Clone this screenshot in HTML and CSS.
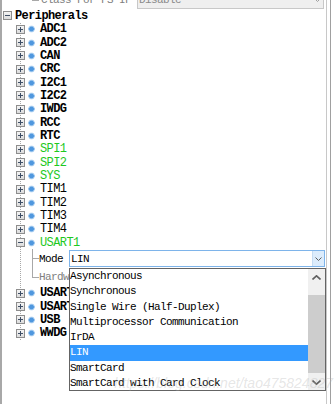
FILE: index.html
```html
<!DOCTYPE html>
<html lang="en">
<head>
  <meta charset="UTF-8">
  <title>Peripherals</title>
  <link rel="stylesheet" href="styles.css">
</head>
<body>
  <div class="frame">
    <div class="panel">

      <!-- property row cut off at the top -->
      <div class="prop top">
        <span class="branch up"></span>
        <span class="label wide dim">Class For FS IF</span>
        <div class="combo disabled">
          <span class="value">Disable</span>
          <span class="btn"><svg width="7" height="4" viewBox="0 0 7 4"><polyline points="0.5,0.5 3.5,3.5 6.5,0.5" fill="none" stroke="#a0a0a0"/></svg></span>
        </div>
      </div>

      <div class="node root"><span class="box"></span><span class="name bold">Peripherals</span></div>

      <div class="children">
        <div class="node"><span class="box plus"></span><span class="dot"></span><span class="name bold">ADC1</span></div>
        <div class="node"><span class="box plus"></span><span class="dot"></span><span class="name bold">ADC2</span></div>
        <div class="node"><span class="box plus"></span><span class="dot"></span><span class="name bold">CAN</span></div>
        <div class="node"><span class="box plus"></span><span class="dot"></span><span class="name bold">CRC</span></div>
        <div class="node"><span class="box plus"></span><span class="dot"></span><span class="name bold">I2C1</span></div>
        <div class="node"><span class="box plus"></span><span class="dot"></span><span class="name bold">I2C2</span></div>
        <div class="node"><span class="box plus"></span><span class="dot"></span><span class="name bold">IWDG</span></div>
        <div class="node"><span class="box plus"></span><span class="dot"></span><span class="name bold">RCC</span></div>
        <div class="node"><span class="box plus"></span><span class="dot"></span><span class="name bold">RTC</span></div>
        <div class="node"><span class="box plus"></span><span class="dot"></span><span class="name green">SPI1</span></div>
        <div class="node"><span class="box plus"></span><span class="dot"></span><span class="name green">SPI2</span></div>
        <div class="node"><span class="box plus"></span><span class="dot"></span><span class="name green">SYS</span></div>
        <div class="node"><span class="box plus"></span><span class="dot"></span><span class="name">TIM1</span></div>
        <div class="node"><span class="box plus"></span><span class="dot"></span><span class="name">TIM2</span></div>
        <div class="node"><span class="box plus"></span><span class="dot"></span><span class="name">TIM3</span></div>
        <div class="node"><span class="box plus"></span><span class="dot"></span><span class="name">TIM4</span></div>
        <div class="node"><span class="box"></span><span class="dot"></span><span class="name green">USART1</span></div>

        <div class="prop">
          <span class="branch"></span>
          <span class="label">Mode</span>
          <div class="combo focus">
            <span class="value">LIN</span>
            <span class="btn"><svg width="7" height="4" viewBox="0 0 7 4"><polyline points="0.5,0.5 3.5,3.5 6.5,0.5" fill="none" stroke="#606060"/></svg></span>

            <!-- open dropdown -->
            <div class="list">
              <ul class="items">
                <li>Asynchronous</li>
                <li>Synchronous</li>
                <li>Single Wire (Half-Duplex)</li>
                <li>Multiprocessor Communication</li>
                <li>IrDA</li>
                <li class="selected">LIN</li>
                <li>SmartCard</li>
                <li>SmartCard with Card Clock</li>
              </ul>
              <div class="scrollbar">
                <span class="arrow"><svg width="9" height="5" viewBox="0 0 9 5"><polyline points="0.5,4.5 4.5,0.8 8.5,4.5" fill="none" stroke="#606060" stroke-width="1.6"/></svg></span>
                <div class="track"><span class="thumb"></span></div>
                <span class="arrow"><svg width="9" height="5" viewBox="0 0 9 5"><polyline points="0.5,0.5 4.5,4.2 8.5,0.5" fill="none" stroke="#606060" stroke-width="1.6"/></svg></span>
              </div>
            </div>
          </div>
        </div>

        <div class="prop">
          <span class="branch last"></span>
          <span class="label dim">Hardw</span>
          <div class="combo"></div>
        </div>

        <div class="node"><span class="box plus"></span><span class="dot"></span><span class="name bold">USART2</span></div>
        <div class="node"><span class="box plus"></span><span class="dot"></span><span class="name bold">USART3</span></div>
        <div class="node"><span class="box plus"></span><span class="dot"></span><span class="name bold">USB</span></div>
        <div class="node"><span class="box plus"></span><span class="dot"></span><span class="name bold">WWDG</span></div>
      </div>
    </div>
  </div>

  <div class="watermark">https://blog.csdn.net/tao475824827</div>
</body>
</html>
```

FILE: styles.css
```css
body {
  margin: 0;
  width: 335px;
  height: 404px;
  overflow: hidden;
  background: #fff;
  color: #000;
  font-family: "Liberation Mono", monospace;
  font-size: 11px;
}
.frame {
  width: 330px;
  height: 420px;
  border-right: 1px solid #a0a0a0;
}
.panel {
  width: 324px;
  height: 100%;
  border-left: 2px solid #a8a8a8;
  border-right: 1px solid #c8c8c8;
}
.children {
  background-image: linear-gradient(#a8a8a8 50%, transparent 50%);
  background-size: 1px 2px;
  background-repeat: repeat-y;
  background-position: 18px 0;
  padding-bottom: 20px;
  background-clip: content-box;
}

/* tree nodes */
.node {
  display: flex;
  align-items: center;
  height: 13.33px;
  padding-left: 14px;
}
.node.root {
  padding-left: 1px;
}
.box {
  width: 7px;
  height: 7px;
  border: 1px solid #8e8e8e;
  background-color: #fff;
  background-image: linear-gradient(#3f4f66, #3f4f66), linear-gradient(#f4f4f4, #dcdcdc);
  background-size: 5px 1px, 100% 100%;
  background-position: center, 0 0;
  background-repeat: no-repeat;
  flex: none;
}
.box.plus {
  background-image: linear-gradient(#3f4f66, #3f4f66), linear-gradient(#3f4f66, #3f4f66), linear-gradient(#f4f4f4, #dcdcdc);
  background-size: 5px 1px, 1px 5px, 100% 100%;
  background-position: center, center, 0 0;
}
.dot {
  width: 7px;
  height: 8px;
  margin-left: 3px;
  flex: none;
  border-radius: 40% 40% 50% 50%;
  background: radial-gradient(circle at 50% 50%, #4f97de 0 2px, #9cc6ee 2.6px 3px, #e2eef9 3.4px, transparent 4px);
}
.name {
  margin-left: 5px;
  font-size: 12px;
  letter-spacing: -0.6px;
  white-space: nowrap;
}
.root .name {
  margin-left: 3px;
}
.bold {
  font-weight: bold;
}
.green {
  color: #1ec81e;
}

/* property rows */
.prop {
  display: flex;
  align-items: center;
  height: 18.67px;
  padding-left: 30px;
}
.prop.top {
  margin-top: -9.33px;
}
.branch {
  width: 7px;
  align-self: stretch;
  flex: none;
  background-image: linear-gradient(#a8a8a8, #a8a8a8), linear-gradient(#a8a8a8, #a8a8a8);
  background-size: 1px 100%, 100% 1px;
  background-position: 0 0, 0 50%;
  background-repeat: no-repeat;
}
.branch.last,
.branch.up {
  background-size: 1px 50%, 100% 1px;
}
.label {
  width: 30px;
  flex: none;
  overflow: hidden;
  white-space: nowrap;
  letter-spacing: -0.6px;
}
.label.wide {
  width: 96px;
  padding-left: 2px;
}
.dim {
  color: #808080;
}
.combo {
  position: relative;
  flex: 1;
  display: flex;
  align-items: center;
  height: 15px;
  margin-right: 1px;
  border: 1px solid #c8c8c8;
  background: #fff;
  letter-spacing: -0.6px;
}
.combo .value {
  flex: 1;
  padding-left: 1px;
  white-space: nowrap;
}
.combo.disabled {
  background: #efefef;
  color: #8a8a8a;
  margin-right: 2px;
}
.combo.focus {
  border-color: #7eb4ea;
}
.btn {
  width: 11px;
  align-self: stretch;
  display: flex;
  align-items: center;
  justify-content: center;
}
.focus .btn {
  background: #dcecfc;
  border-left: 1px solid #c5dcf3;
}

/* open dropdown list */
.list {
  position: absolute;
  top: calc(100% + 2px);
  left: -1px;
  right: -2px;
  height: 121px;
  z-index: 2;
  display: flex;
  border: 1px solid #646464;
  background: #fff;
}
.items {
  flex: 1;
  margin: 0;
  padding: 0;
  list-style: none;
}
.items li {
  height: 15.25px;
  line-height: 15.25px;
  white-space: nowrap;
}
.items li.selected {
  background: #3399ff;
  color: #fff;
}
.scrollbar {
  width: 17px;
  display: flex;
  flex-direction: column;
  background: #f0f0f0;
}
.arrow {
  height: 17px;
  display: flex;
  align-items: center;
  justify-content: center;
  flex: none;
}
.track {
  flex: 1;
  padding: 9px 0 1px;
}
.thumb {
  display: block;
  height: 78px;
  background: #cdcdcd;
}

.watermark {
  position: absolute;
  right: 2px;
  top: 375px;
  z-index: 3;
  font-family: "Liberation Sans", sans-serif;
  font-style: italic;
  font-size: 14px;
  color: rgba(170, 170, 170, 0.3);
  white-space: nowrap;
}
```
